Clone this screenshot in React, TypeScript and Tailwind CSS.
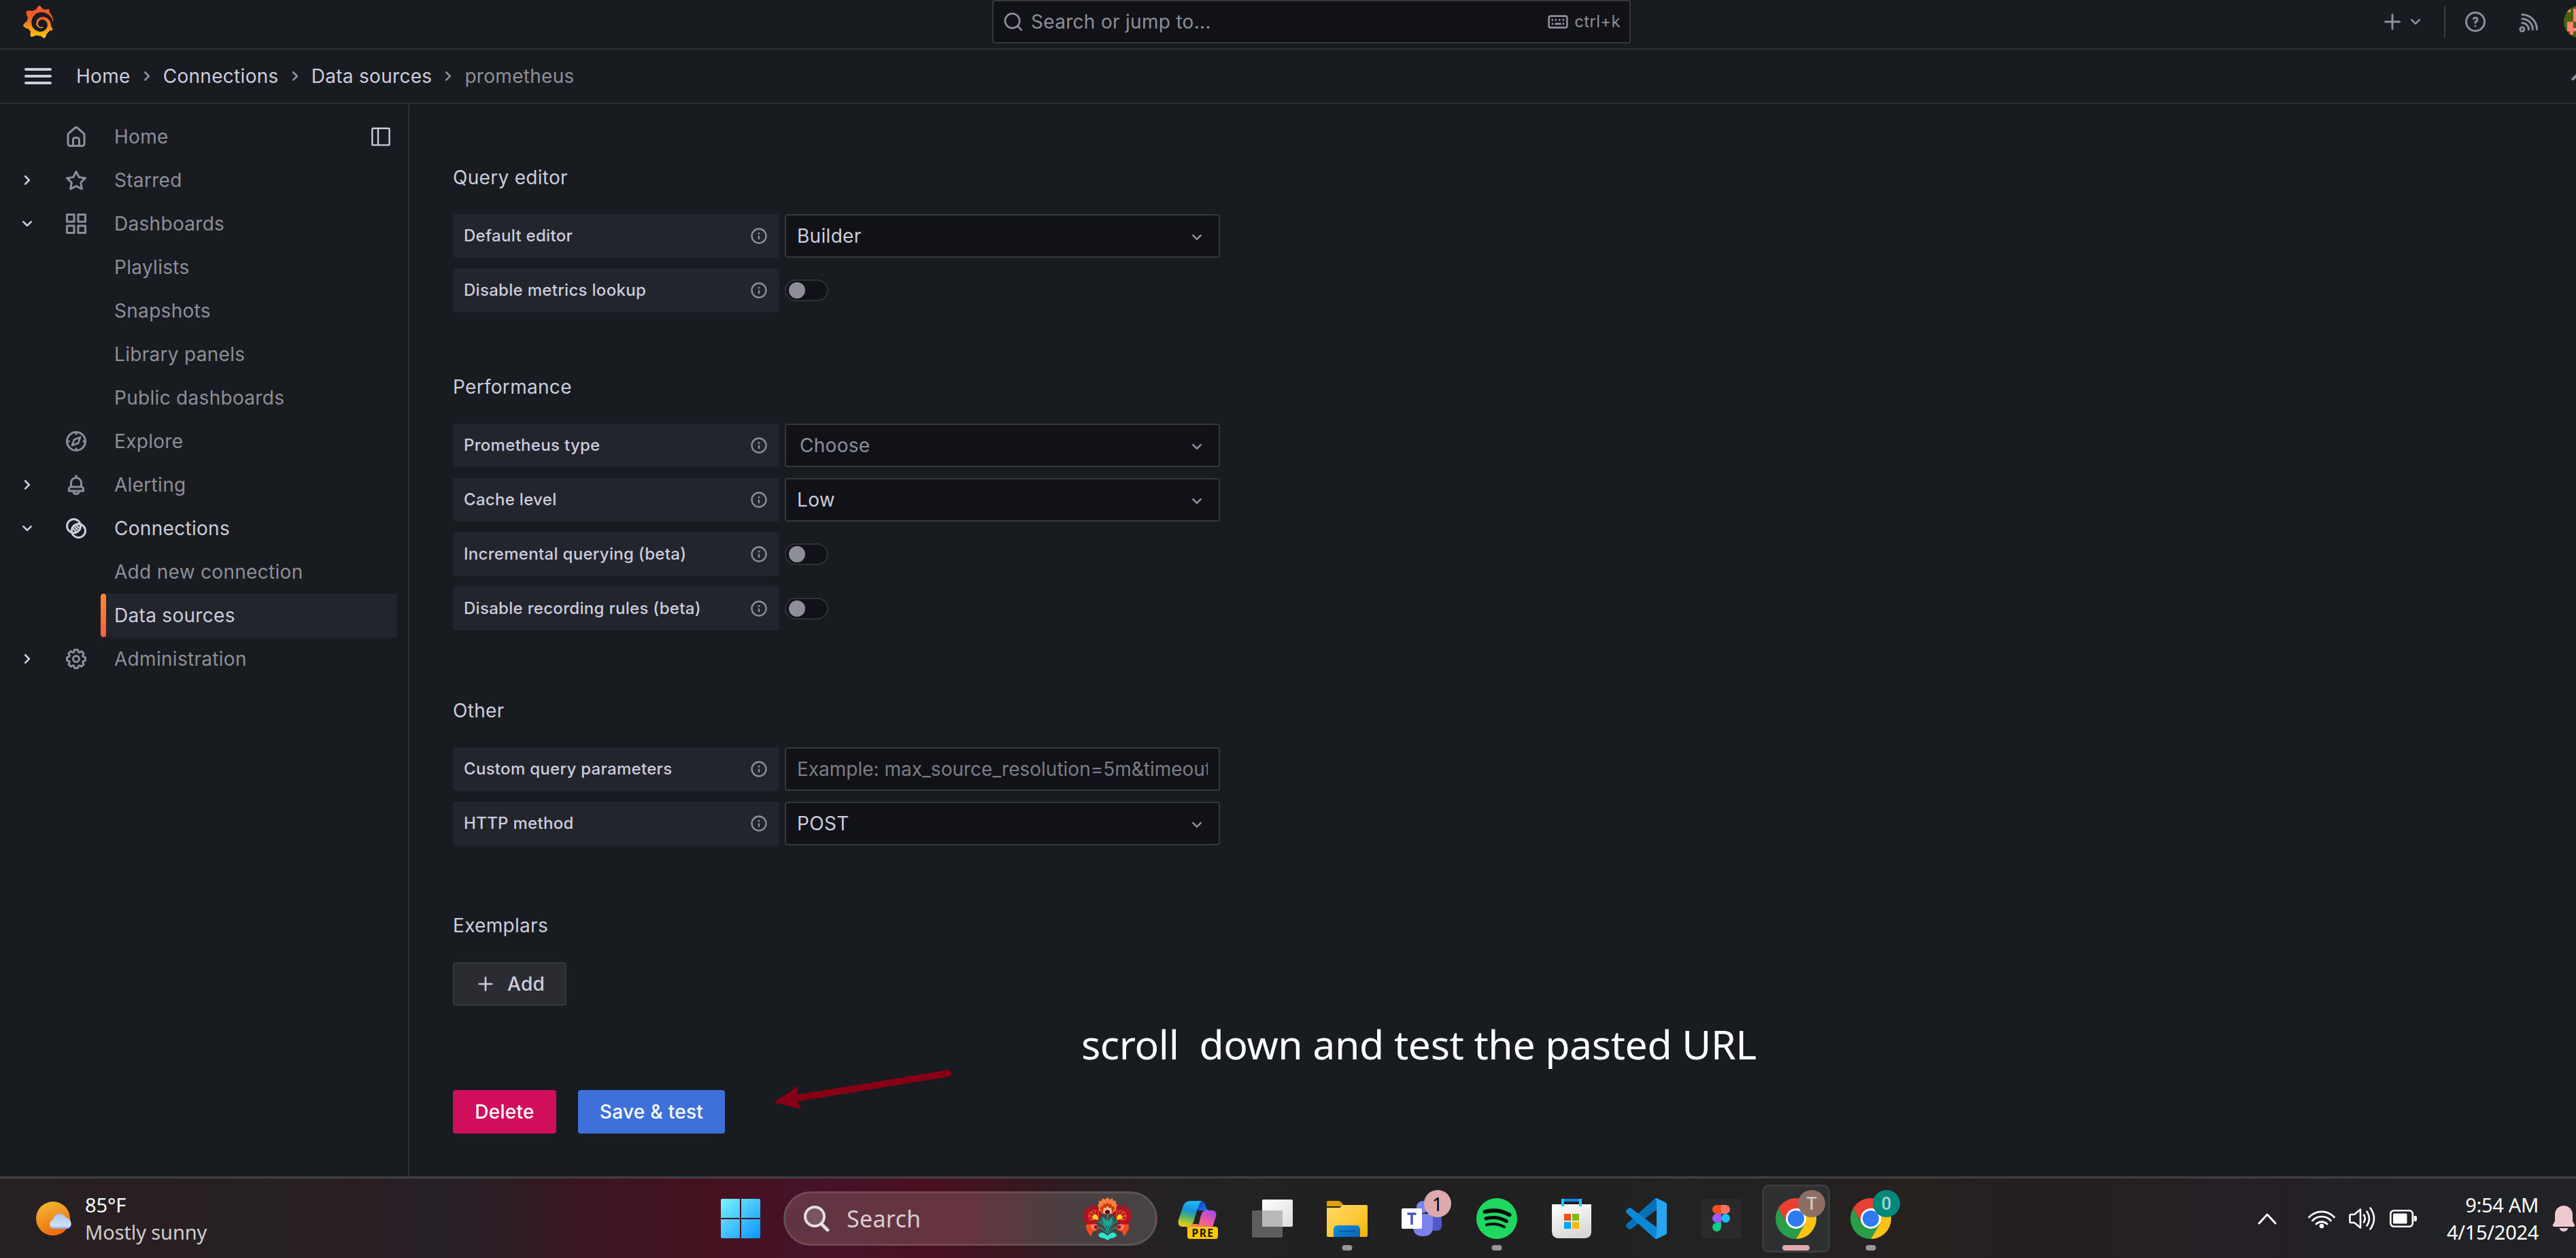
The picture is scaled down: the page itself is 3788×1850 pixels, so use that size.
import React from "react";
import { SiGrafana } from "react-icons/si";

const PATHS = {
  home: "M20,8h0L14,2.74a3,3,0,0,0-4,0L4,8a3,3,0,0,0-1,2.26V19a3,3,0,0,0,3,3H18a3,3,0,0,0,3-3V10.25A3,3,0,0,0,20,8ZM14,20H10V15a1,1,0,0,1,1-1h2a1,1,0,0,1,1,1Zm5-1a1,1,0,0,1-1,1H16V15a3,3,0,0,0-3-3H11a3,3,0,0,0-3,3v5H6a1,1,0,0,1-1-1V10.25a1,1,0,0,1,.34-.75l6-5.25a1,1,0,0,1,1.32,0l6,5.25a1,1,0,0,1,.34.75Z",
  star: "M22,9.67A1,1,0,0,0,21.14,9l-5.69-.83L12.9,3a1,1,0,0,0-1.8,0L8.55,8.16,2.86,9a1,1,0,0,0-.81.68,1,1,0,0,0,.25,1l4.13,4-1,5.68A1,1,0,0,0,6.9,21.44L12,18.77l5.1,2.67a.93.93,0,0,0,.46.12,1,1,0,0,0,.59-.19,1,1,0,0,0,.4-1l-1-5.68,4.13-4A1,1,0,0,0,22,9.67Zm-6.15,4a1,1,0,0,0-.29.88l.72,4.2-3.76-2a1.06,1.06,0,0,0-.94,0l-3.76,2,.72-4.2a1,1,0,0,0-.29-.88l-3-3,4.21-.61a1,1,0,0,0,.76-.55L12,5.7l1.88,3.82a1,1,0,0,0,.76.55l4.21.61Z",
  apps: "M10,13H3a1,1,0,0,0-1,1v7a1,1,0,0,0,1,1h7a1,1,0,0,0,1-1V14A1,1,0,0,0,10,13ZM9,20H4V15H9ZM21,2H14a1,1,0,0,0-1,1v7a1,1,0,0,0,1,1h7a1,1,0,0,0,1-1V3A1,1,0,0,0,21,2ZM20,9H15V4h5Zm1,4H14a1,1,0,0,0-1,1v7a1,1,0,0,0,1,1h7a1,1,0,0,0,1-1V14A1,1,0,0,0,21,13Zm-1,7H15V15h5ZM10,2H3A1,1,0,0,0,2,3v7a1,1,0,0,0,1,1h7a1,1,0,0,0,1-1V3A1,1,0,0,0,10,2ZM9,9H4V4H9Z",
  bell: "M18,13.18V10a6,6,0,0,0-5-5.91V3a1,1,0,0,0-2,0V4.09A6,6,0,0,0,6,10v3.18A3,3,0,0,0,4,16v2a1,1,0,0,0,1,1H8.14a4,4,0,0,0,7.72,0H19a1,1,0,0,0,1-1V16A3,3,0,0,0,18,13.18ZM8,10a4,4,0,0,1,8,0v3H8Zm4,10a2,2,0,0,1-1.72-1h3.44A2,2,0,0,1,12,20Zm6-3H6V16a1,1,0,0,1,1-1H17a1,1,0,0,1,1,1Z",
  cog: "M21.32,9.55l-1.89-.63.89-1.78A1,1,0,0,0,20.13,6L18,3.87a1,1,0,0,0-1.15-.19l-1.78.89-.63-1.89A1,1,0,0,0,13.5,2h-3a1,1,0,0,0-.95.68L8.92,4.57,7.14,3.68A1,1,0,0,0,6,3.87L3.87,6a1,1,0,0,0-.19,1.15l.89,1.78-1.89.63A1,1,0,0,0,2,10.5v3a1,1,0,0,0,.68.95l1.89.63-.89,1.78A1,1,0,0,0,3.87,18L6,20.13a1,1,0,0,0,1.15.19l1.78-.89.63,1.89a1,1,0,0,0,.95.68h3a1,1,0,0,0,.95-.68l.63-1.89,1.78.89A1,1,0,0,0,18,20.13L20.13,18a1,1,0,0,0,.19-1.15l-.89-1.78,1.89-.63A1,1,0,0,0,22,13.5v-3A1,1,0,0,0,21.32,9.55ZM20,12.78l-1.2.4A2,2,0,0,0,17.64,16l.57,1.14-1.1,1.1L16,17.64a2,2,0,0,0-2.79,1.16l-.4,1.2H11.22l-.4-1.2A2,2,0,0,0,8,17.64l-1.14.57-1.1-1.1L6.36,16A2,2,0,0,0,5.2,13.18L4,12.78V11.22l1.2-.4A2,2,0,0,0,6.36,8L5.79,6.89l1.1-1.1L8,6.36A2,2,0,0,0,10.82,5.2l.4-1.2h1.56l.4,1.2A2,2,0,0,0,16,6.36l1.14-.57,1.1,1.1L17.64,8a2,2,0,0,0,1.16,2.79l1.2.4ZM12,8a4,4,0,1,0,4,4A4,4,0,0,0,12,8Zm0,6a2,2,0,1,1,2-2A2,2,0,0,1,12,14Z",
  info: "M12,2A10,10,0,1,0,22,12,10.01114,10.01114,0,0,0,12,2Zm0,18a8,8,0,1,1,8-8A8.00917,8.00917,0,0,1,12,20Zm0-8.5a1,1,0,0,0-1,1v3a1,1,0,0,0,2,0v-3A1,1,0,0,0,12,11.5Zm0-4a1.25,1.25,0,1,0,1.25,1.25A1.25,1.25,0,0,0,12,7.5Z",
  question: "M11.29,15.29a1.58,1.58,0,0,0-.12.15.76.76,0,0,0-.09.18.64.64,0,0,0-.06.18,1.36,1.36,0,0,0,0,.2.84.84,0,0,0,.08.38.9.9,0,0,0,.54.54.94.94,0,0,0,.76,0,.9.9,0,0,0,.54-.54A1,1,0,0,0,13,16a1,1,0,0,0-.29-.71A1,1,0,0,0,11.29,15.29ZM12,2A10,10,0,1,0,22,12,10,10,0,0,0,12,2Zm0,18a8,8,0,1,1,8-8A8,8,0,0,1,12,20ZM12,7A3,3,0,0,0,9.4,8.5a1,1,0,1,0,1.73,1A1,1,0,0,1,12,9a1,1,0,0,1,0,2,1,1,0,0,0-1,1v1a1,1,0,0,0,2,0v-.18A3,3,0,0,0,12,7Z",
  search: "M21.71,20.29,18,16.61A9,9,0,1,0,16.61,18l3.68,3.68a1,1,0,0,0,1.42,0A1,1,0,0,0,21.71,20.29ZM11,18a7,7,0,1,1,7-7A7,7,0,0,1,11,18Z",
  plus: "M19,11H13V5a1,1,0,0,0-2,0v6H5a1,1,0,0,0,0,2h6v6a1,1,0,0,0,2,0V13h6a1,1,0,0,0,0-2Z",
  down: "M17,9.17a1,1,0,0,0-1.41,0L12,12.71,8.46,9.17a1,1,0,0,0-1.41,0,1,1,0,0,0,0,1.42l4.24,4.24a1,1,0,0,0,1.42,0L17,10.59A1,1,0,0,0,17,9.17Z",
};

type IconName = keyof typeof PATHS;

function Icon({ name, className = "size-9" }: { name: IconName; className?: string }) {
  return (
    <svg viewBox="0 0 24 24" fill="currentColor" className={`shrink-0 ${className}`}>
      <path d={PATHS[name]} />
    </svg>
  );
}

function CompassIcon() {
  return (
    <svg viewBox="0 0 24 24" className="size-9" fill="none" stroke="currentColor" strokeWidth="2" strokeLinecap="round" strokeLinejoin="round">
      <circle cx="12" cy="12" r="9" />
      <path d="M12 3v1.8M12 19.2V21M3 12h1.8M19.2 12H21" />
      <path d="M16 8l-2 5.8L8 16l2-5.6z" strokeWidth="1.8" />
    </svg>
  );
}

function ConnectionsIcon() {
  return (
    <svg viewBox="0 0 24 24" className="size-9" fill="none" stroke="currentColor" strokeWidth="2">
      <circle cx="9.7" cy="9.7" r="6.7" />
      <circle cx="14.3" cy="14.3" r="6.7" />
      <path d="M9 12.2l3 3M10.5 10.5l3 3M12 8.8l3 3" strokeWidth="1.7" />
    </svg>
  );
}

function KeyboardIcon() {
  return (
    <svg viewBox="0 0 24 24" className="size-8 shrink-0" fill="none" stroke="currentColor" strokeWidth="2">
      <rect x="2" y="5.7" width="20" height="12.8" rx="2" />
      <path d="M5 10h1.8M8.8 10h1.8M12.8 10h1.8M17 10h1.8M5 14.3h1.8M8.6 14.3h7M17 14.3h1.8" strokeWidth="2.2" />
    </svg>
  );
}

function RssIcon() {
  return (
    <svg viewBox="0 0 24 24" className="size-9" fill="none" stroke="currentColor" strokeWidth="2" strokeLinecap="round">
      <circle cx="4.6" cy="19.4" r="2" />
      <path d="M4.5 5A14.5 14.5 0 0 1 19 19.5M4.5 9.2A10.3 10.3 0 0 1 14.9 19.5M4.5 13.2A6.3 6.3 0 0 1 10.9 19.5" />
    </svg>
  );
}

function PanelIcon() {
  return (
    <svg viewBox="0 0 32 32" className="size-8" fill="none" stroke="currentColor" strokeWidth="2.4">
      <rect x="3.4" y="3.8" width="25.2" height="24.6" rx="1" />
      <path d="M12 4v24" />
    </svg>
  );
}

const SECTION_ICONS: Record<string, React.ReactNode> = {
  Home: <Icon name="home" />,
  Starred: <Icon name="star" />,
  Dashboards: <Icon name="apps" />,
  Explore: <CompassIcon />,
  Alerting: <Icon name="bell" />,
  Connections: <ConnectionsIcon />,
  Administration: <Icon name="cog" />,
};

type NavEntry = { label: string; arrow?: "right" | "down"; bright?: boolean; child?: boolean; active?: boolean };

const NAV: NavEntry[] = [
  { label: "Home" },
  { label: "Starred", arrow: "right" },
  { label: "Dashboards", arrow: "down" },
  { label: "Playlists", child: true },
  { label: "Snapshots", child: true },
  { label: "Library panels", child: true },
  { label: "Public dashboards", child: true },
  { label: "Explore" },
  { label: "Alerting", arrow: "right" },
  { label: "Connections", arrow: "down", bright: true },
  { label: "Add new connection", child: true },
  { label: "Data sources", child: true, active: true },
  { label: "Administration", arrow: "right" },
];

function NavRow({ item }: { item: NavEntry }) {
  if (item.child) {
    return (
      <div
        className={
          item.active
            ? "ml-[148px] mr-4 flex h-16 items-center overflow-hidden rounded bg-[#22252b] text-[#ccccdc]"
            : "ml-[148px] mr-4 flex h-16 items-center"
        }
      >
        <span className={item.active ? "h-16 w-2 rounded bg-linear-to-b from-[#ff8833] to-[#f55f3e]" : "h-16 w-2"} />
        <span className="ml-3">{item.label}</span>
      </div>
    );
  }
  return (
    <div className={item.bright ? "flex h-16 items-center text-[#ccccdc]" : "flex h-16 items-center"}>
      <span className="ml-6 flex w-8 text-[#ccccdc]">
        {item.arrow && <Icon name="down" className={item.arrow === "right" ? "size-8 -rotate-90" : "size-8"} />}
      </span>
      <span className="ml-[38px] flex w-9">{SECTION_ICONS[item.label]}</span>
      <span className="ml-[38px] flex-1">{item.label}</span>
      {item.label === "Home" && (
        <span className="mr-6 text-[#ccccdc]">
          <PanelIcon />
        </span>
      )}
    </div>
  );
}

function TopBar() {
  return (
    <header className="flex h-[73px] items-start border-b-2 border-[#2d2f35]">
      <div className="flex w-[1459px] pl-8 pt-2">
        <svg width="0" height="0">
          <defs>
            <linearGradient id="logoFill" x1="0" y1="1" x2="0" y2="0">
              <stop offset="0" stopColor="#fcc90c" />
              <stop offset="0.2" stopColor="#f9ab14" />
              <stop offset="0.65" stopColor="#f15a29" />
              <stop offset="1" stopColor="#f15a29" />
            </linearGradient>
          </defs>
        </svg>
        <SiGrafana size={48} fill="url(#logoFill)" />
      </div>
      <div className="flex h-16 w-[939px] items-center rounded border-2 border-[#36373d] bg-[#111217] px-[13px] text-[#8e8e99]">
        <Icon name="search" className="size-8" />
        <span className="ml-2.5 flex-1">Search or jump to...</span>
        <KeyboardIcon />
        <span className="ml-2 text-2xl tracking-[0.0125em]">ctrl+k</span>
      </div>
      <div className="flex h-16 flex-1 items-center justify-end text-[#8e8e99]">
        <Icon name="plus" />
        <Icon name="down" className="size-8" />
        <span className="ml-[26px] h-12 w-0.5 bg-[#3a3c42]" />
        <span className="ml-[26px]">
          <Icon name="question" />
        </span>
        <span className="ml-11">
          <RssIcon />
        </span>
        <span className="ml-8 flex h-12 w-[18px] overflow-hidden">
          <svg viewBox="0 0 18 48" className="h-12 w-[18px]" shapeRendering="crispEdges">
            <defs>
              <clipPath id="avatarClip">
                <circle cx="24" cy="24" r="24" />
              </clipPath>
            </defs>
            <g clipPath="url(#avatarClip)">
              <path d="M0 0h48v48H0z" fill="#48610a" />
              <path d="M5 5h5v5H5zM14 5h4v19h-4zM5 24h9v9h4v5h-4v5H9v-5H5z" fill="#ff8074" />
            </g>
          </svg>
        </span>
      </div>
    </header>
  );
}

function Breadcrumbs() {
  const trail = ["Home", "Connections", "Data sources"];
  return (
    <div className="flex h-20 items-center overflow-hidden border-b-2 border-[#2d2f35] pl-9">
      <span className="flex w-10 flex-col gap-1.5">
        <span className="h-1 rounded-full bg-[#ccccdc]" />
        <span className="h-1 rounded-full bg-[#ccccdc]" />
        <span className="h-1 rounded-full bg-[#ccccdc]" />
      </span>
      <nav className="ml-9 flex flex-1 items-center text-[#ccccdc]">
        {trail.map((t) => (
          <React.Fragment key={t}>
            <span>{t}</span>
            <span className="mx-2 text-[#8e8e99]">
              <Icon name="down" className="size-8 -rotate-90" />
            </span>
          </React.Fragment>
        ))}
        <span className="text-[#8e8e99]">prometheus</span>
      </nav>
      <Icon name="down" className="-mr-7 size-12 rotate-180 text-[#8e8e99]" />
    </div>
  );
}

type Control = { kind: "select" | "input" | "toggle"; value?: string; muted?: boolean };

function FieldRow({ label, control }: { label: string; control: Control }) {
  return (
    <div className="flex h-16 items-center gap-2">
      <div className="flex h-16 w-[480px] items-center justify-between rounded bg-[#22252b] px-4 text-2xl font-medium tracking-[0.0125em]">
        {label}
        <Icon name="info" className="size-7 text-[#8e8e99]" />
      </div>
      {control.kind === "toggle" ? (
        <div className="flex h-8 w-16 items-center rounded-full border-2 border-[#303137] bg-[#111217] pl-1">
          <span className="size-6 rounded-full bg-[#8e8e99]" />
        </div>
      ) : (
        <div className="flex h-16 w-[640px] items-center rounded border-2 border-[#36373d] bg-[#111217] px-4">
          <span
            className={
              control.kind === "input"
                ? "flex-1 overflow-hidden whitespace-nowrap tracking-normal text-[#7b7c86]"
                : control.muted
                  ? "ml-1 flex-1 text-[#8e8e99]"
                  : "flex-1"
            }
          >
            {control.value}
          </span>
          {control.kind === "select" && <Icon name="down" className="mt-1 size-8 text-[#8e8e99]" />}
        </div>
      )}
    </div>
  );
}

function Section({ title, className, children }: { title: string; className: string; children: React.ReactNode }) {
  return (
    <section className={className}>
      <h3 className="mb-8 h-11 leading-[44px]">{title}</h3>
      <div className="flex flex-col gap-4">{children}</div>
    </section>
  );
}

function Content() {
  return (
    <main className="relative flex-1 pl-16 pt-[86px] text-[#ccccdc]">
      <Section title="Query editor" className="">
        <FieldRow label="Default editor" control={{ kind: "select", value: "Builder" }} />
        <FieldRow label="Disable metrics lookup" control={{ kind: "toggle" }} />
      </Section>
      <Section title="Performance" className="mt-[88px]">
        <FieldRow label="Prometheus type" control={{ kind: "select", value: "Choose", muted: true }} />
        <FieldRow label="Cache level" control={{ kind: "select", value: "Low" }} />
        <FieldRow label="Incremental querying (beta)" control={{ kind: "toggle" }} />
        <FieldRow label="Disable recording rules (beta)" control={{ kind: "toggle" }} />
      </Section>
      <Section title="Other" className="mt-24">
        <FieldRow label="Custom query parameters" control={{ kind: "input", value: "Example: max_source_resolution=5m&timeout" }} />
        <FieldRow label="HTTP method" control={{ kind: "select", value: "POST" }} />
      </Section>
      <Section title="Exemplars" className="mt-24">
        <button className="flex h-16 w-[167px] items-center gap-4 rounded border-2 border-[#36373d] bg-[#2b2c31] px-[30px] font-medium">
          <Icon name="plus" className="size-8" />
          Add
        </button>
      </Section>
      <div className="mt-[124px] flex gap-8 font-medium text-white">
        <button className="h-16 w-[152px] rounded bg-[#d10e5c]">Delete</button>
        <button className="h-16 w-[216px] rounded bg-[#3d71d9]">Save &amp; test</button>
      </div>

      {/* Annotations drawn over the page */}
      <svg viewBox="0 0 270 62" className="absolute left-[533px] top-[1417px] h-[62px] w-[270px]" fill="#850014">
        <path d="M259 8.5L30 46" stroke="#850014" strokeWidth="10" strokeLinecap="round" />
        <path d="M2.5 51L39 27L35.5 46L44 61Z" />
      </svg>
      <p className="absolute left-[988px] top-[1337px] whitespace-pre font-['Noto_Sans'] text-[59px] leading-[90px] tracking-[-0.4px] text-white">
        {"scroll  down and test the pasted URL"}
      </p>
    </main>
  );
}

function WeatherIcon() {
  return (
    <svg viewBox="0 0 56 52" className="h-[52px] w-14 shrink-0">
      <defs>
        <linearGradient id="sun" x1="0.2" y1="0" x2="0.6" y2="1">
          <stop offset="0" stopColor="#f0bb35" />
          <stop offset="1" stopColor="#f0660c" />
        </linearGradient>
        <linearGradient id="cloud" x1="0" y1="0" x2="0" y2="1">
          <stop offset="0" stopColor="#a9c6f3" />
          <stop offset="0.8" stopColor="#cfe1fa" />
          <stop offset="1" stopColor="#7ea6e6" />
        </linearGradient>
      </defs>
      <circle cx="25" cy="26" r="25" fill="url(#sun)" />
      <path d="M26 41a7 7 0 0 1-1-13.500a10 10 0 0 1 19-2.500a8.500 8.500 0 0 1 3 16z" fill="url(#cloud)" />
    </svg>
  );
}

function WindowsLogo() {
  return (
    <svg viewBox="0 0 58 58" className="size-[58px]">
      <defs>
        <linearGradient id="win" gradientUnits="userSpaceOnUse" x1="0" y1="0" x2="58" y2="58">
          <stop offset="0" stopColor="#7df3ff" />
          <stop offset="1" stopColor="#0a94ff" />
        </linearGradient>
      </defs>
      <path d="M2 0H28V28H0V2Q0 0 2 0ZM30 0H56Q58 0 58 2V28H30ZM0 30H28V58H2Q0 58 0 56ZM30 30H58V56Q58 58 56 58H30Z" fill="url(#win)" />
    </svg>
  );
}

/* Left half of the side blossoms; the right half is the same drawing mirrored. */
function SideBlossom() {
  return (
    <>
      <path d="M21 32L2 29M20 33L3 35M21 30L2 23M21 29L6 18M22 28L12 14M23 28L19 14.500M23 29L25 19M20 34L7 40" stroke="#c20a1e" strokeWidth="4.500" strokeLinecap="round" />
      <path d="M22 33Q8 38 7 30Q7 20 17 19Q25 20 23 30Z" fill="#e8402a" />
      <path d="M19 31L9 31M19 29L10 25M20 28L14 21M21 28L19 21" stroke="#8c0b1e" strokeWidth="1.500" strokeLinecap="round" />
      <path d="M13 32Q14 25 18.500 25.500Q22 28 22 34Z" fill="#ffd21f" />
      <path d="M4 41L17 39.500Q24 42 22 47Q18 51 14 51L11 58.500L7 52Q3 46 4 41Z" fill="#fb4a1c" />
      <path d="M10 42L18 41Q23 43 21 46.500Q16 50 13 47Z" fill="#ff8f70" />
      <ellipse cx="18.500" cy="44.500" rx="3" ry="2.600" fill="#a50a24" />
    </>
  );
}

function FlowerArt() {
  return (
    <svg viewBox="0 0 72 64" className="h-16 w-[72px]">
      <SideBlossom />
      <g transform="matrix(-1 0 0 1 71 0)">
        <SideBlossom />
      </g>
      <path d="M23 17L21 12L23 10L23 6L27 6L28 2L32 4L35.500 1L39 4L43 2L44 6L48 6L48 10L50 12L48 17L49 20L45 22L42 25H29L26 22L22 20Z" fill="#ff7e3e" />
      <path d="M25 18L26 14L29 14L30 10L33 11L35.500 8L38 11L41 10L42 14L45 14L46 18L42 24H29Z" fill="#c63c08" />
      <path d="M29 23L30 16L33 17L35.500 13.500L38 17L41 16L42 23L38 26H33Z" fill="#ffc09c" />
      <ellipse cx="35.500" cy="22.500" rx="3.600" ry="3.300" fill="#5e0812" />
      <path d="M35.500 26V54M35.500 52Q32 40 21 36M35.500 52Q39 40 50 36M34 54Q30 46 22 45M37 54Q41 46 49 45M35 50Q31 38 25 33M36 50Q40 38 46 33" stroke="#129e8c" strokeWidth="1.500" fill="none" />
      <path d="M27 28L35.500 36L44 28L41 40L35.500 44L30 40Z" fill="#13a892" />
      <path d="M22 57Q24 51 30 53L35.500 57L41 53Q47 51 49 57Q46 61 40 61L35.500 64L31 61Q25 61 22 57Z" fill="#2ee6c9" />
    </svg>
  );
}

function CopilotIcon() {
  return (
    <svg viewBox="-2 0 62 60" className="h-[60px] w-[62px]">
      <defs>
        <linearGradient id="cpA" x1="0.2" y1="0" x2="0" y2="1">
          <stop offset="0" stopColor="#1fb4ee" />
          <stop offset="0.3" stopColor="#1591dc" />
          <stop offset="0.55" stopColor="#4fb06e" />
          <stop offset="0.8" stopColor="#c0c928" />
          <stop offset="1" stopColor="#fbc50a" />
        </linearGradient>
        <linearGradient id="cpB" x1="0.8" y1="0" x2="0.2" y2="1">
          <stop offset="0" stopColor="#a34bf0" />
          <stop offset="0.5" stopColor="#e254a8" />
          <stop offset="1" stopColor="#fd7d62" />
        </linearGradient>
        <linearGradient id="cpC" x1="0" y1="0" x2="1" y2="1">
          <stop offset="0" stopColor="#0d35c4" />
          <stop offset="1" stopColor="#1f7fe6" />
        </linearGradient>
      </defs>
      <path d="M28 4H33Q39 4 41 11Q42 17 46 18H29Z" fill="url(#cpC)" />
      <path d="M12 38H30V46H18Q14 46 12 41Z" fill="#ff7a4e" />
      <path d="M38 18H50Q58 18 56 27L52 40Q50 45 46 45H28Q30 42 32 34Q35 18 40 18Z" fill="url(#cpB)" />
      <path d="M19 4H36Q32 6 29 15L23 35Q21 42 14 42H6Q-1 41 1 32L8 11Q11 4 19 4Z" fill="url(#cpA)" />
      <rect x="14" y="42" width="45" height="18" rx="4" fill="#fec800" />
      <text x="37" y="56.500" textAnchor="middle" fontFamily="Noto Sans, sans-serif" fontWeight="700" fontSize="15.500" letterSpacing="1.500" fill="#151310">
        PRE
      </text>
    </svg>
  );
}

function TaskViewIcon() {
  return (
    <svg viewBox="0 0 60 60" className="size-[60px]">
      <defs>
        <linearGradient id="tv" x1="0" y1="0" x2="1" y2="1">
          <stop offset="0" stopColor="#ffffff" />
          <stop offset="1" stopColor="#dddddd" />
        </linearGradient>
      </defs>
      <rect x="15" y="2" width="45" height="40" rx="2" fill="url(#tv)" />
      <rect x="0" y="18" width="45" height="40" rx="2" fill="#5e5e5e" />
      <rect x="15" y="18" width="30" height="24" fill="#b9b9b9" />
    </svg>
  );
}

function FolderIcon() {
  return (
    <svg viewBox="0 0 60 60" className="size-[60px]">
      <defs>
        <linearGradient id="fol" x1="0" y1="0" x2="1" y2="1">
          <stop offset="0" stopColor="#ffd968" />
          <stop offset="0.5" stopColor="#ffcb3c" />
          <stop offset="1" stopColor="#f5b105" />
        </linearGradient>
        <linearGradient id="folB" x1="0" y1="0" x2="1" y2="1">
          <stop offset="0" stopColor="#1590df" />
          <stop offset="1" stopColor="#0562b5" />
        </linearGradient>
      </defs>
      <path d="M0 6Q0 4 2 4H17Q20 4 22 7L26 12H0Z" fill="#e0a006" />
      <path d="M0 14H19L24 10H58Q60 10 60 12V55Q60 57 58 57H2Q0 57 0 55Z" fill="url(#fol)" />
      <path d="M10 57V46Q10 40 16 40H43Q49 40 49 46V57Z" fill="url(#folB)" />
      <path d="M18 48.500H42" stroke="#0a4f94" strokeWidth="1.500" />
    </svg>
  );
}

function TeamsIcon() {
  return (
    <svg viewBox="0 0 60 60" className="size-[60px]">
      <circle cx="31" cy="13" r="9" fill="#7b83eb" />
      <path d="M42 22H59V40Q59 48 51 48H42Z" fill="#5059c9" />
      <path d="M17 23H46V42Q46 56 31.500 56Q17 56 17 42Z" fill="#7b83eb" />
      <rect x="0" y="15" width="30" height="30" rx="2" fill="#ffffff" />
      <path d="M8.500 23H21.500M15 23V39" stroke="#4b53bc" strokeWidth="3.500" />
    </svg>
  );
}

function SpotifyIcon() {
  return (
    <svg viewBox="0 0 60 60" className="size-[60px]" fill="none" stroke="#0a0a0a" strokeLinecap="round">
      <circle cx="30" cy="30" r="30" fill="#1ed760" stroke="none" />
      <path d="M12.500 20C24 16.500 38 18 48.500 24.500" strokeWidth="6" />
      <path d="M14 30C24 27.300 35 28.500 44.500 34" strokeWidth="5" />
      <path d="M15 39.200C24 37 33 37.700 41 42.300" strokeWidth="4" />
    </svg>
  );
}

function StoreIcon() {
  return (
    <svg viewBox="0 0 58 60" className="h-[60px] w-[58px]">
      <defs>
        <linearGradient id="bag" x1="0" y1="0" x2="0.4" y2="1">
          <stop offset="0" stopColor="#ffffff" />
          <stop offset="1" stopColor="#d9d9d9" />
        </linearGradient>
      </defs>
      <path d="M0 9H58V49Q58 59 47 59H11Q0 59 0 49Z" fill="url(#bag)" />
      <path d="M16 12V3H42V12" fill="none" stroke="#2bc3ef" strokeWidth="4" />
      <path d="M18 3H40" stroke="#1287ea" strokeWidth="4" />
      <path d="M18 23h10v10H18z" fill="#f34f1c" />
      <path d="M30 23h10v10H30z" fill="#7fbc00" />
      <path d="M18 35h10v10H18z" fill="#01a6f0" />
      <path d="M30 35h10v10H30z" fill="#ffba01" />
    </svg>
  );
}

function CodeIcon() {
  return (
    <svg viewBox="0 0 60 60" className="size-[60px]">
      <path d="M43 0L1 38Q-1 40 1 43L4 45.500Q6 46.500 8 45L45 17V0Z" fill="#0272b6" />
      <path d="M8 15Q6 13.500 4 14.500L1 17Q-1 20 1 22L43 60H45V43Z" fill="#0a8ad6" />
      <path d="M45 0L58.500 6.500Q60 7.500 60 9V51Q60 52.500 58.500 53.500L45 60Q43.500 60 43 59L45 56V4L43 1Q44 0 45 0Z" fill="#27a5f2" />
    </svg>
  );
}

function FigmaIcon() {
  return (
    <svg viewBox="0 0 58 58" className="size-[58px]">
      <rect width="58" height="58" rx="2" fill="#2a2a2a" />
      <path d="M22.500 9H29V22H22.500A6.500 6.500 0 0 1 22.500 9Z" fill="#f24e1e" />
      <path d="M29 9H35.500A6.500 6.500 0 0 1 35.500 22H29Z" fill="#ff7262" />
      <path d="M22.500 22H29V35H22.500A6.500 6.500 0 0 1 22.500 22Z" fill="#a259ff" />
      <circle cx="35.500" cy="28.500" r="6.500" fill="#1abcfe" />
      <path d="M22.500 35H29V41.500A6.500 6.500 0 1 1 22.500 35Z" fill="#0acf83" />
    </svg>
  );
}

function ChromeIcon() {
  return (
    <svg viewBox="0 0 60 60" className="size-[60px]">
      <path d="M4.020 15A30 30 0 0 1 55.980 15L30 15L17 37.500Z" fill="#ea4033" />
      <path d="M55.980 15A30 30 0 0 1 30 60L43 37.500L30 15Z" fill="#fcc315" />
      <path d="M30 60A30 30 0 0 1 4.020 15L17 37.500H43Z" fill="#2a9d49" />
      <circle cx="30" cy="30" r="15" fill="#ffffff" />
      <circle cx="30" cy="30" r="12" fill="#2f7af0" />
    </svg>
  );
}

function Slot({ children, indicator, badge, active }: { children: React.ReactNode; indicator?: "dot" | "bar"; badge?: React.ReactNode; active?: boolean }) {
  return (
    <div
      className={
        active
          ? "relative mx-[5px] flex h-[100px] w-[100px] items-center justify-center rounded-[10px] border-[3px] border-[#3a3b3c] bg-[#2e2f31]"
          : "relative mx-[5px] flex h-[100px] w-[100px] items-center justify-center rounded-[10px] border-[3px] border-transparent"
      }
    >
      {children}
      {badge}
      {indicator === "dot" && <span className="absolute bottom-0 left-1/2 h-2 w-[15px] -translate-x-1/2 rounded-full bg-[#989898]" />}
      {indicator === "bar" && <span className="absolute bottom-0 left-1/2 h-2 w-10 -translate-x-1/2 rounded-full bg-[#dfaaae]" />}
    </div>
  );
}

function Taskbar() {
  return (
    <footer className="flex h-[120px] shrink-0 items-center border-t-[3px] border-[#454143] bg-[linear-gradient(90deg,#262122_0px,#281f22_200px,#262124_400px,#2a1e24_520px,#252127_640px,#2e1c24_760px,#3d1421_880px,#44121f_1040px,#451329_1200px,#4a1022_1360px,#3c1620_1480px,#2c1d20_1580px,#242222_1710px,#212121_1900px,#202020_2200px,#212220_2400px,#202224_2560px,#242120_2700px,#272120_2800px,#241f20_3000px,#242025_3280px,#241f27_3360px,#212226_3540px,#202225_3788px)] font-['Noto_Sans'] text-white">
      <div className="flex w-[1034px] items-center pl-[53px]">
        <WeatherIcon />
        <div className="ml-4 text-[29px] leading-10 tracking-[-0.1px]">
          <div>85°F</div>
          <div className="text-[#cfcbcc]">Mostly sunny</div>
        </div>
      </div>
      <Slot>
        <WindowsLogo />
      </Slot>
      <div className="ml-2 mr-1 flex h-20 w-[550px] items-center rounded-full border-[3px] border-white/10 bg-[linear-gradient(90deg,#623443,#65343f_50%,#4b3f41_75%,#454343)] pl-[27px] pr-[34px]">
        <svg viewBox="0 0 38 38" className="size-[38px]" fill="none" stroke="#e3e0e3" strokeWidth="4" strokeLinecap="round">
          <circle cx="16" cy="16" r="14" fill="#7a5460" />
          <path d="M26 27l9 9" strokeWidth="5" />
        </svg>
        <span className="ml-[25px] flex-1 text-[34px] leading-10 text-[#d9ccd2]">Search</span>
        <FlowerArt />
      </div>
      <Slot>
        <CopilotIcon />
      </Slot>
      <Slot>
        <TaskViewIcon />
      </Slot>
      <Slot indicator="dot">
        <FolderIcon />
      </Slot>
      <Slot
        badge={
          <span className="absolute right-1 top-[5px] flex size-10 items-center justify-center rounded-full bg-[#dfaaae] text-[28px] leading-none text-black">
            1
          </span>
        }
      >
        <TeamsIcon />
      </Slot>
      <Slot indicator="dot">
        <SpotifyIcon />
      </Slot>
      <Slot>
        <StoreIcon />
      </Slot>
      <Slot>
        <CodeIcon />
      </Slot>
      <Slot>
        <FigmaIcon />
      </Slot>
      <Slot
        active
        indicator="bar"
        badge={
          <span className="absolute right-1 top-[5px] flex size-10 items-center justify-center rounded-full bg-[#8d6e63] font-['Roboto'] text-[26px] font-medium leading-none text-[#d3c6c1]">
            T
          </span>
        }
      >
        <ChromeIcon />
      </Slot>
      <Slot
        indicator="dot"
        badge={
          <span className="absolute right-1 top-[5px] flex size-10 items-center justify-center rounded-full bg-[#00897b] font-['Roboto'] text-[26px] font-medium leading-none text-[#a5d4cf]">
            0
          </span>
        }
      >
        <ChromeIcon />
      </Slot>
      <div className="flex flex-1 items-center justify-end">
        <svg viewBox="0 0 28 18" className="h-[18px] w-7" fill="none" stroke="white" strokeWidth="3" strokeLinecap="round" strokeLinejoin="round">
          <path d="M2 16L14 3L26 16" />
        </svg>
        <svg viewBox="0 0 40 36" className="ml-[46px] h-9 w-10" fill="none" stroke="white" strokeWidth="2.800" strokeLinecap="round">
          <path d="M1.500 16A25 25 0 0 1 38.500 16M6.500 21A18.500 18.500 0 0 1 33.500 21M12 26A11.500 11.500 0 0 1 28 26" />
          <circle cx="20" cy="29" r="3.300" fill="white" stroke="none" />
        </svg>
        <svg viewBox="0 0 40 36" className="ml-5 h-9 w-10" fill="none" stroke="white" strokeWidth="2.600" strokeLinecap="round" strokeLinejoin="round">
          <path d="M3 12Q1.500 12 1.500 13.500V22.500Q1.500 24 3 24H8L17 31.500V4.500L8 12Z" />
          <path d="M22 12.500Q25.500 18 22 23.500M26.500 7.500Q33.500 18 26.500 28.500M31.500 2.500Q42.500 18 31.500 33.500" />
        </svg>
        <svg viewBox="0 0 40 26" className="ml-5 h-[26px] w-10" fill="none">
          <rect x="1.300" y="1.300" width="32.500" height="23.400" rx="5" stroke="white" strokeWidth="2.600" />
          <rect x="5" y="5.500" width="20.500" height="15" rx="1.500" fill="white" />
          <path d="M35.500 9H38Q40 9 40 11V15Q40 17 38 17H35.500Z" fill="white" />
        </svg>
        <div className="ml-[39px] w-[140px] whitespace-nowrap text-right text-[29px] leading-10 tracking-[-0.3px]">
          <div>9:54 AM</div>
          <div>4/15/2024</div>
        </div>
        <svg viewBox="0 0 34 40" className="ml-5 mr-px h-10 w-[34px]" fill="#f0c9d0">
          <path d="M4 14A13 13 0 0 1 30 14V24L33 29Q34 32 31 32H3Q0 32 1 29L4 24ZM10.500 34H23.500Q22 39 17 39Q12 39 10.500 34Z" />
        </svg>
      </div>
    </footer>
  );
}

export default function App() {
  return (
    <div className="flex h-[1850px] w-[3788px] flex-col overflow-hidden bg-[#181b1f] font-['Inter'] text-[28px] leading-10 tracking-[0.01071em]">
      <TopBar />
      <Breadcrumbs />
      <div className="flex min-h-0 flex-1">
        <aside className="w-[602px] border-r-2 border-[#2d2f35] pt-4 text-[#8e8e99]">
          {NAV.map((item) => (
            <NavRow key={item.label} item={item} />
          ))}
        </aside>
        <Content />
      </div>
      <Taskbar />
    </div>
  );
}
